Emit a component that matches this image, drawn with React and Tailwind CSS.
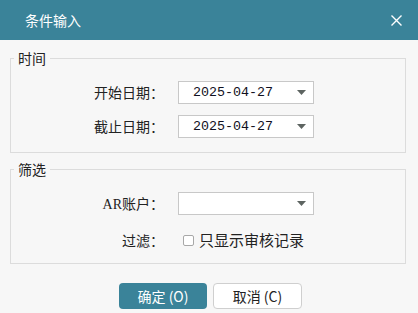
import React from 'react';

const FONT = { fontFamily: '"Noto Sans CJK SC", "Noto Sans", sans-serif' };

function Arrow() {
  return (
    <svg width="9" height="5" viewBox="0 0 9 5" className="shrink-0">
      <path d="M0 0h9L4.5 5z" fill="#5d6461" />
    </svg>
  );
}

function Combo({ value }) {
  return (
    <div className="flex items-center justify-between w-[136px] h-[23px] bg-white border border-[#c8c8c8] pl-[14px] pr-[7px]">
      <span className="text-[13.33px] text-[#101020] leading-none" style={{ fontFamily: '"Liberation Mono", monospace' }}>
        {value}
      </span>
      <Arrow />
    </div>
  );
}

function Row({ label, children, className = '' }) {
  return (
    <div className={`flex items-center ${className}`}>
      <div className="w-[154px] pr-[1px] text-right text-[14px] text-[#222]">{label}</div>
      <div className="ml-[13px]">{children}</div>
    </div>
  );
}

export default function App() {
  return (
    <div className="relative w-[418px] h-[313px] overflow-hidden bg-[#f7f7f7]" style={FONT}>
      <div className="flex items-center justify-between h-[40px] bg-[#3a8399] pl-[25px] pr-[16px] text-white">
        <span className="text-[14px]">条件输入</span>
        <svg width="11" height="11" viewBox="0 0 11 11">
          <path d="M0.5 0.5l10 10M10.5 0.5l-10 10" stroke="#fff" strokeWidth="1.4" />
        </svg>
      </div>

      <div className="pt-[8px]">
        <fieldset className="mx-[10px] w-[396px] h-[105px] border border-[#dcdcdc]">
          <legend className="ml-[3px] px-[4px] text-[14px] leading-[20px] text-[#222]">时间</legend>
          <div className="flex flex-col gap-[11px] pt-[13px]">
            <Row label="开始日期：">
              <Combo value="2025-04-27" />
            </Row>
            <Row label="截止日期：">
              <Combo value="2025-04-27" />
            </Row>
          </div>
        </fieldset>

        <fieldset className="mt-[6px] mx-[10px] w-[396px] h-[105px] border border-[#dcdcdc]">
          <legend className="ml-[3px] px-[4px] text-[14px] leading-[20px] text-[#222]">筛选</legend>
          <div className="flex flex-col gap-[14px] pt-[13px]">
            <Row label={<><span style={{ fontFamily: '"Liberation Serif", serif' }}>AR</span>账户：</>}>
              <Combo value="" />
            </Row>
            <Row label="过滤：">
              <label className="flex items-center gap-[5px] ml-[5px] text-[15px] text-[#222]">
                <span className="w-[11px] h-[11px] mt-[1px] bg-white border border-[#a8a8a8] rounded-[2px]" />
                只显示审核记录
              </label>
            </Row>
          </div>
        </fieldset>

        <div className="flex justify-center gap-[6px] mt-[19px] pl-[3px]">
          <button className="w-[88px] h-[26px] rounded-[4px] bg-[#3a8399] text-white text-[14px]">
            确定 (O)
          </button>
          <button className="w-[89px] h-[26px] rounded-[4px] bg-white border border-[#cfcfcf] text-[#222] text-[14px]">
            取消 (C)
          </button>
        </div>
      </div>
    </div>
  );
}
